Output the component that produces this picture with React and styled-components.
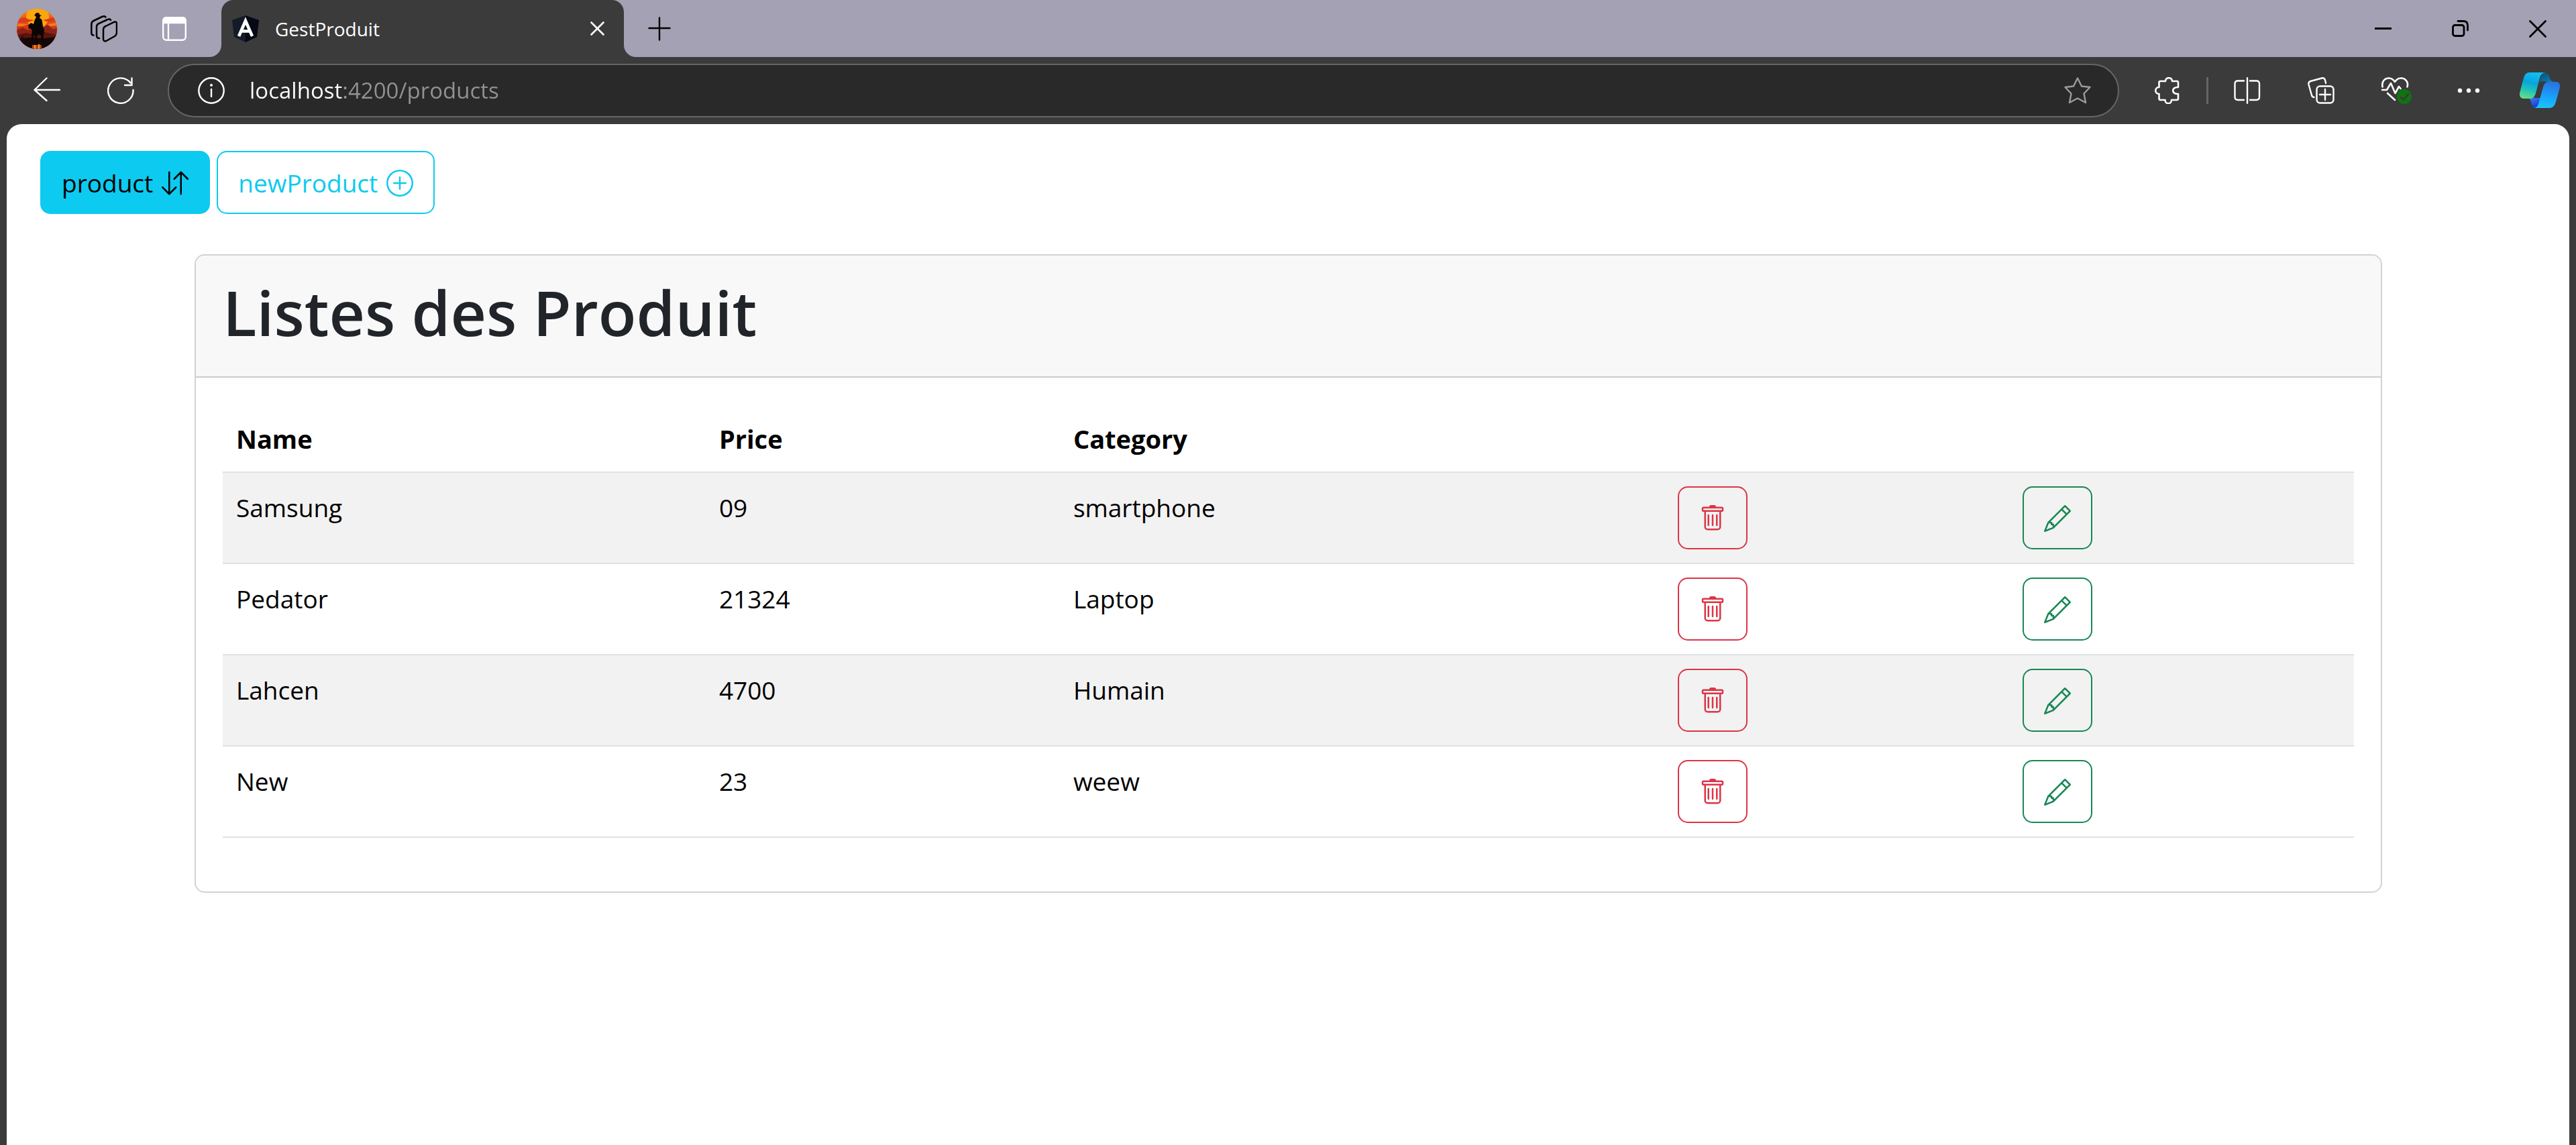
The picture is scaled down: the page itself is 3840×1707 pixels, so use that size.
import React, { useState } from 'react';
import styled, { createGlobalStyle, css } from 'styled-components';
import { BsArrowDownUp, BsPencil, BsPlusCircle, BsTrash } from 'react-icons/bs';

const colors = {
  frame: '#3b3b3b',
  strip: '#a3a1b3',
  info: '#0dcaf0',
  danger: '#dc3545',
  success: '#198754',
};

const GlobalStyle = createGlobalStyle`
  *, *::before, *::after { box-sizing: border-box; }
  body {
    margin: 0;
    background: ${colors.frame};
    color: #212529;
    font-family: "Open Sans", "Noto Sans", sans-serif;
    font-size: 37px;
    line-height: 60px;
  }
  svg { display: block; flex: none; }
`;

const Window = styled.div`
  display: flex;
  flex-direction: column;
  min-height: 100vh;
`;

/* ---------- tab strip ---------- */

const TabStrip = styled.header`
  display: flex;
  height: 85px;
`;

const StripStart = styled.div`
  display: flex;
  align-items: center;
  padding: 0 50px 0 25px;
  background: ${colors.strip};
  border-bottom-right-radius: 18px;
`;

const StripEnd = styled.div`
  display: flex;
  flex: 1;
  justify-content: space-between;
  background: ${colors.strip};
  border-bottom-left-radius: 18px;
`;

const TabSlot = styled.div`
  background: ${colors.strip};
`;

const Tab = styled.div`
  display: flex;
  align-items: center;
  width: 600px;
  height: 100%;
  padding: 0 29px 0 16px;
  background: ${colors.frame};
  border-radius: 18px 18px 0 0;
  color: #fff;
`;

const TabTitle = styled.span`
  flex: 1;
  padding-left: 24px;
  font-size: 28px;
  line-height: 40px;
`;

const PlainButton = styled.button`
  display: flex;
  align-items: center;
  justify-content: center;
  padding: 0;
  border: 0;
  background: none;
  color: inherit;
  font: inherit;
`;

const StripButton = styled(PlainButton)`
  width: 40px;
  margin-left: ${p => p.$gap}px;
  color: ${p => p.$color || '#000'};
`;

const NewTabButton = styled(PlainButton)`
  width: 106px;
  color: #000;
`;

const WindowControls = styled.div`
  display: flex;
`;

const WindowButton = styled(PlainButton)`
  width: 115px;
  color: #000;
`;

/* ---------- toolbar ---------- */

const Toolbar = styled.div`
  display: flex;
  align-items: center;
  height: 100px;
  padding: 0 24px 0 50px;
  color: #fff;
`;

const ToolGroup = styled.div`
  display: flex;
  align-items: center;
  gap: ${p => p.$gap}px;
`;

const ToolButton = styled(PlainButton)`
  min-width: 40px;
  height: 60px;
`;

const HealthButton = styled(ToolButton)`
  width: 40px;
  justify-content: flex-start;
`;

const CopilotButton = styled(ToolButton)`
  margin-left: 56px;
`;

const Divider = styled.span`
  width: 3px;
  height: 40px;
  background: #666;
`;

const AddressBar = styled.form`
  display: flex;
  flex: 1;
  align-items: center;
  height: 80px;
  margin: 0 52px 0 50px;
  padding: 0 40px 0 43px;
  border: 2px solid #666;
  border-radius: 40px;
  background: #292929;
`;

const AddressInput = styled.input`
  flex: 1;
  min-width: 0;
  margin: 0 37px;
  padding: 0;
  border: 0;
  outline: 0;
  background: linear-gradient(90deg, #fff 140px, #929292 140px);
  background-clip: text;
  -webkit-background-clip: text;
  color: transparent;
  font: inherit;
  font-size: 33px;
  line-height: 60px;
`;

/* ---------- page ---------- */

const Page = styled.div`
  flex: 1;
  margin: 0 10px;
  background: #fff;
  border-radius: 22px 22px 0 0;
`;

const Nav = styled.nav`
  display: flex;
  gap: 10px;
  padding: 40px 50px 0;
`;

const buttonShape = css`
  display: inline-flex;
  align-items: center;
  gap: 13px;
  padding: 16px 30px 14px;
  border: 2px solid ${p => p.$color};
  border-radius: 15px;
  background: ${p => (p.$solid ? p.$color : 'transparent')};
  color: ${p => (p.$solid ? '#000' : p.$color)};
  font: inherit;
  line-height: 60px;
  text-decoration: none;
`;

const LinkButton = styled.a`${buttonShape}`;

const ActionButton = styled.button`
  ${buttonShape}
  height: 94px;
  vertical-align: top;
`;

const Container = styled.main`
  padding: 60px 279px 60px 280px;
`;

const Card = styled.section`
  border: 2px solid #d2d2d2;
  border-radius: 15px;
  overflow: hidden;
`;

const CardHeader = styled.div`
  padding: 24px 40px 36px;
  border-bottom: 2px solid #cccccc;
  background: #f8f8f8;
`;

const Title = styled.h1`
  margin: 0;
  font-size: 93px;
  font-weight: 600;
  line-height: 120px;
`;

const CardBody = styled.div`
  padding: 40px 40px 80px;
`;

const Table = styled.table`
  width: 100%;
  table-layout: fixed;
  border-collapse: separate;
  border-spacing: 0;
  color: #000;
`;

const Column = styled.col`
  width: ${p => p.$share}%;
`;

const HeadCell = styled.th`
  padding: 21px 20px 19px;
  border-bottom: 2px solid #dee2e6;
  font-size: 38px;
  font-weight: 700;
  text-align: left;
`;

const Cell = styled.td`
  padding: 22px 20px 18px;
  border-bottom: 2px solid #dee2e6;
  vertical-align: top;
`;

const ActionCell = styled(Cell)`
  padding: 20px;
`;

const Row = styled.tr`
  &:nth-child(odd) { background: #f2f2f2; }
`;

/* ---------- drawings ---------- */

const Line = ({ w = 40, h = 40, sw = 2.4, children }) => (
  <svg width={w} height={h} viewBox={`0 0 ${w} ${h}`} fill="none" stroke="currentColor"
    strokeWidth={sw} strokeLinecap="round" strokeLinejoin="round" aria-hidden="true">
    {children}
  </svg>
);

const Avatar = () => (
  <svg width="60" height="60" viewBox="0 0 60 60" aria-hidden="true">
    <defs>
      <clipPath id="avatarClip"><circle cx="30" cy="30" r="30" /></clipPath>
      <linearGradient id="avatarSky" x1="0" y1="0" x2="0" y2="1">
        <stop offset="0" stopColor="#f58a10" />
        <stop offset=".35" stopColor="#e8481a" />
        <stop offset=".55" stopColor="#c22a16" />
      </linearGradient>
    </defs>
    <g clipPath="url(#avatarClip)">
      <rect width="60" height="60" fill="url(#avatarSky)" />
      <circle cx="31" cy="12" r="17" fill="#fba60c" />
      <path d="M0 15l12-2 6 3 8 1-9 3-17 1zM60 11l-12 4-9 2 8 3 13-2z" fill="#dc3a18" />
      <path d="M3 22l14 1-8 3H0zM46 23l14-2v4l-10 1z" fill="#f0801a" />
      <path d="M0 32l9-4 8 5 7-6 10 5 12-8 8 7 6-2v14H0z" fill="#8a2316" />
      <path d="M0 39l14-3 12 3 16-4 18 4v21H0z" fill="#5a1510" />
      <path d="M0 45l18-2 22 1 20-2v18H0z" fill="#140806" />
      <path d="M23 54h14v6H23z" fill="#b8430e" />
      <path d="M26 54h2v6h-2zM32 53h2v7h-2z" fill="#f59a18" />
      <path d="M6 47l1-7 1 2 2-3-1 8z" fill="#200b08" />
      <path d="M27 9q1-3 4-3t3 3l3 1-2 1-1 3q4 1 4 6l1 6 2 6-1 8-1 9h-2l-1-9-4-2-2 4 1 9h-3l-1-12-2 2v7h-2l-1-9 1-7-3-3-2 1-1-5 4-4 4 2 2-7 2-3-1-2-2-1z" fill="#0b0504" />
    </g>
  </svg>
);

const Workspaces = () => (
  <Line sw={2.5}>
    <path d="M22.5 16L35 9.800Q39 8.500 39 12.500V25.500Q39 29 36 31L23.500 38Q19 39.500 19 35V21Q19 17.500 22.500 16Z" />
    <path d="M30 7Q29 4.500 25.500 6L12.500 12Q9 13.500 9 17V30Q9 34 13 34" />
    <path d="M22.500 2.500Q21 .300 17 2L4.500 8Q1.300 9.500 1.300 13V26Q1.300 29.500 4.500 29.500" />
  </Line>
);

const TabActions = () => (
  <Line w={36} h={36} sw={2.4}>
    <rect x="1.200" y="1.200" width="33.600" height="33.600" rx="5" />
    <path d="M1.500 9V5.500Q1.500 1.500 5.500 1.500H30.500Q34.500 1.500 34.500 5.500V9Z" fill="currentColor" />
    <path d="M9 10V34" />
  </Line>
);

const AngularMark = () => (
  <svg width="40" height="40" viewBox="0 0 40 40" aria-hidden="true">
    <path d="M20 0L0 7l3 25 17 8z" fill="#141a28" />
    <path d="M20 0l20 7-3 25-17 8z" fill="#050816" />
    <path d="M10 31L20 8l10 23M14.500 23.500h11" fill="none" stroke="#fff" strokeWidth="4.600" />
  </svg>
);

const Close = ({ size, sw }) => (
  <Line w={size} h={size} sw={sw}>
    <path d={`M1.500 1.500L${size - 1.5} ${size - 1.5}M${size - 1.5} 1.500L1.500 ${size - 1.5}`} />
  </Line>
);

const Puzzle = () => (
  <Line sw={2.6}>
    <path d="M9.500 6H17C17-.500 27-.500 27 6H34Q36 6 36 8V15C25.500 14.500 25.500 25.500 36 25V32Q36 34 34 34H26C26 41 16.500 41 16.500 34H9.500Q7.500 34 7.500 32V25C.500 25 .500 15 7.500 15V8Q7.500 6 9.500 6Z" />
  </Line>
);

const Collections = () => (
  <Line>
    <rect x="13.500" y="13.500" width="25" height="25" rx="5" />
    <path d="M26 18V34M18 26H34" />
    <path d="M27 9L26 4.500Q24.800 .600 21 1.500L4.500 6Q.700 7.200 1.500 11L6 27Q7 30 9.500 30" />
  </Line>
);

const Health = () => (
  <Line w={46} h={40} sw={2.6}>
    <path d="M1.500 14.500C0 6.500 5 1.500 11 1.500C15 1.500 18 4 20 7C22 4 25 1.500 29 1.500C36 1.500 40.500 7.500 38.500 14.500" />
    <path d="M1 19H8L14 9L20.500 24L26 14L28.500 17M9 24L20 34" />
    <circle cx="34" cy="29" r="11" fill="#0f7410" stroke="none" />
    <path d="M29 30L32.500 33.500L40 25.500" stroke="#3b3b3b" />
  </Line>
);

const Copilot = () => (
  <svg width="60" height="54" viewBox="0 0 60 54" aria-hidden="true">
    <defs>
      <linearGradient id="copilotLeft" x1=".6" y1="0" x2=".35" y2="1">
        <stop offset="0" stopColor="#12c0f2" />
        <stop offset=".4" stopColor="#08a4dc" />
        <stop offset=".7" stopColor="#22c4b8" />
        <stop offset="1" stopColor="#62dd85" />
      </linearGradient>
      <linearGradient id="copilotRight" x1=".6" y1="0" x2=".4" y2="1">
        <stop offset="0" stopColor="#2a72e0" />
        <stop offset=".6" stopColor="#16a6fb" />
        <stop offset="1" stopColor="#1fc3f6" />
      </linearGradient>
      <linearGradient id="copilotTop" x1="0" y1="0" x2="1" y2="1">
        <stop offset="0" stopColor="#0a4c78" />
        <stop offset="1" stopColor="#0d86bd" />
      </linearGradient>
      <linearGradient id="copilotBottom" x1="0" y1="0" x2=".6" y2="1">
        <stop offset="0" stopColor="#3b82f8" />
        <stop offset="1" stopColor="#1536cc" />
      </linearGradient>
    </defs>
    <path d="M34 0C41 0 43.500 3 44.500 7C45.500 11 47 14 52 14H42C36 14 34 12 29 15Z" fill="url(#copilotTop)" />
    <path d="M12 38C16 39.500 16.500 42 17.500 46C18.500 50.500 20.500 53 25 53L34 38Z" fill="url(#copilotBottom)" />
    <path d="M25 37L31 15H38L33 33Q31.500 38 28 38Z" fill="#3b3b3b" />
    <path d="M15 0H38C33 1 31 4 30 8L24 31C22.500 36 20 39 15.500 39H6C1 39-1 35 .500 29L6 8C7.500 3 10 0 15 0Z" fill="url(#copilotLeft)" />
    <path d="M43.500 14H54C59.500 14 61 18 59.500 24L54 44C52 50 49 53 44.500 53H22C26 52 27.500 49 28.500 45L35 22C36.500 16.500 39 14 43.500 14Z" fill="url(#copilotRight)" />
  </svg>
);

/* ---------- data ---------- */

const initialProducts = [
  { name: 'Samsung', price: '09', category: 'smartphone' },
  { name: 'Pedator', price: '21324', category: 'Laptop' },
  { name: 'Lahcen', price: '4700', category: 'Humain' },
  { name: 'New', price: '23', category: 'weew' },
];

function BrowserTabs() {
  return (
    <TabStrip>
      <StripStart>
        <PlainButton aria-label="Profile"><Avatar /></PlainButton>
        <StripButton $gap={50} aria-label="Workspaces"><Workspaces /></StripButton>
        <StripButton $gap={65} $color="#fff" aria-label="Tab actions"><TabActions /></StripButton>
      </StripStart>
      <TabSlot>
        <Tab>
          <AngularMark />
          <TabTitle>GestProduit</TabTitle>
          <PlainButton aria-label="Close tab"><Close size={21} sw={2.6} /></PlainButton>
        </Tab>
      </TabSlot>
      <StripEnd>
        <NewTabButton aria-label="New tab">
          <Line w={34} h={36}><path d="M17 1.500V34.500M1.500 17H32.500" /></Line>
        </NewTabButton>
        <WindowControls>
          <WindowButton aria-label="Minimize">
            <Line w={25} h={25} sw={3}><path d="M0 12.500H25" strokeLinecap="butt" /></Line>
          </WindowButton>
          <WindowButton aria-label="Restore">
            <Line w={25} h={25} sw={2.8}>
              <rect x="1.500" y="7.500" width="16.500" height="16" rx="3" />
              <path d="M9 1.500H17Q23.500 1.500 23.500 8V15" />
            </Line>
          </WindowButton>
          <WindowButton aria-label="Close"><Close size={26} sw={2.8} /></WindowButton>
        </WindowControls>
      </StripEnd>
    </TabStrip>
  );
}

function BrowserToolbar() {
  const [address, setAddress] = useState('localhost:4200/products');
  return (
    <Toolbar>
      <ToolGroup $gap={70}>
        <ToolButton aria-label="Back">
          <Line><path d="M39 19H1.500M19.500 1.500L1.500 19L19.500 35" /></Line>
        </ToolButton>
        <ToolButton aria-label="Reload">
          <Line><path d="M38.500 19A18.700 18.700 0 1 1 34.500 8.500M36.500 1.500V12H26" /></Line>
        </ToolButton>
      </ToolGroup>
      <AddressBar onSubmit={e => e.preventDefault()}>
        <Line>
          <circle cx="20" cy="20" r="18.700" />
          <path d="M20 18V29" />
          <circle cx="20" cy="12" r="2" fill="currentColor" stroke="none" />
        </Line>
        <AddressInput aria-label="Address" value={address} onChange={e => setAddress(e.target.value)} />
        <StripButton type="button" $gap={0} $color="#9b9b9b" aria-label="Favorite">
          <Line><path d="M20 1.500L26 13.500L38.500 15L29.500 24.500L32 38L20 31.500L8 38L10.500 24.500L1.500 15L14 13.500Z" /></Line>
        </StripButton>
      </AddressBar>
      <ToolGroup $gap={38}>
        <ToolButton aria-label="Extensions"><Puzzle /></ToolButton>
        <Divider />
        <ToolGroup $gap={70}>
          <ToolButton aria-label="Split screen">
            <Line><path d="M20 1.200V38.800M15 5.500H6Q1.500 5.500 1.500 10V29.500Q1.500 34 6 34H15M24 5.500H33.500Q38 5.500 38 10V29.500Q38 34 33.500 34H24" /></Line>
          </ToolButton>
          <ToolButton aria-label="Collections"><Collections /></ToolButton>
          <HealthButton aria-label="Browser essentials"><Health /></HealthButton>
          <ToolButton aria-label="More">
            <Line><g fill="currentColor" stroke="none"><circle cx="7" cy="20" r="3.200" /><circle cx="20" cy="20" r="3.200" /><circle cx="33" cy="20" r="3.200" /></g></Line>
          </ToolButton>
        </ToolGroup>
      </ToolGroup>
      <CopilotButton aria-label="Copilot"><Copilot /></CopilotButton>
    </Toolbar>
  );
}

export default function App() {
  const [products, setProducts] = useState(initialProducts);
  const remove = product => setProducts(products.filter(p => p !== product));

  return (
    <>
      <GlobalStyle />
      <Window>
        <BrowserTabs />
        <BrowserToolbar />
        <Page>
          <Nav>
            <LinkButton href="#products" $color={colors.info} $solid>
              product<BsArrowDownUp size={40} />
            </LinkButton>
            <LinkButton href="#new-product" $color={colors.info}>
              newProduct<BsPlusCircle size={40} />
            </LinkButton>
          </Nav>
          <Container>
            <Card>
              <CardHeader><Title>Listes des Produit</Title></CardHeader>
              <CardBody>
                <Table>
                  <colgroup>
                    <Column $share={22.66} />
                    <Column $share={16.62} />
                    <Column $share={28.36} />
                    <Column $share={16.18} />
                    <Column $share={16.18} />
                  </colgroup>
                  <thead>
                    <tr>
                      <HeadCell scope="col">Name</HeadCell>
                      <HeadCell scope="col">Price</HeadCell>
                      <HeadCell scope="col">Category</HeadCell>
                      <HeadCell as="td" />
                      <HeadCell as="td" />
                    </tr>
                  </thead>
                  <tbody>
                    {products.map(product => (
                      <Row key={product.name}>
                        <Cell>{product.name}</Cell>
                        <Cell>{product.price}</Cell>
                        <Cell>{product.category}</Cell>
                        <ActionCell>
                          <ActionButton $color={colors.danger} aria-label={`Delete ${product.name}`} onClick={() => remove(product)}>
                            <BsTrash size={40} />
                          </ActionButton>
                        </ActionCell>
                        <ActionCell>
                          <ActionButton $color={colors.success} aria-label={`Edit ${product.name}`}>
                            <BsPencil size={40} />
                          </ActionButton>
                        </ActionCell>
                      </Row>
                    ))}
                  </tbody>
                </Table>
              </CardBody>
            </Card>
          </Container>
        </Page>
      </Window>
    </>
  );
}
